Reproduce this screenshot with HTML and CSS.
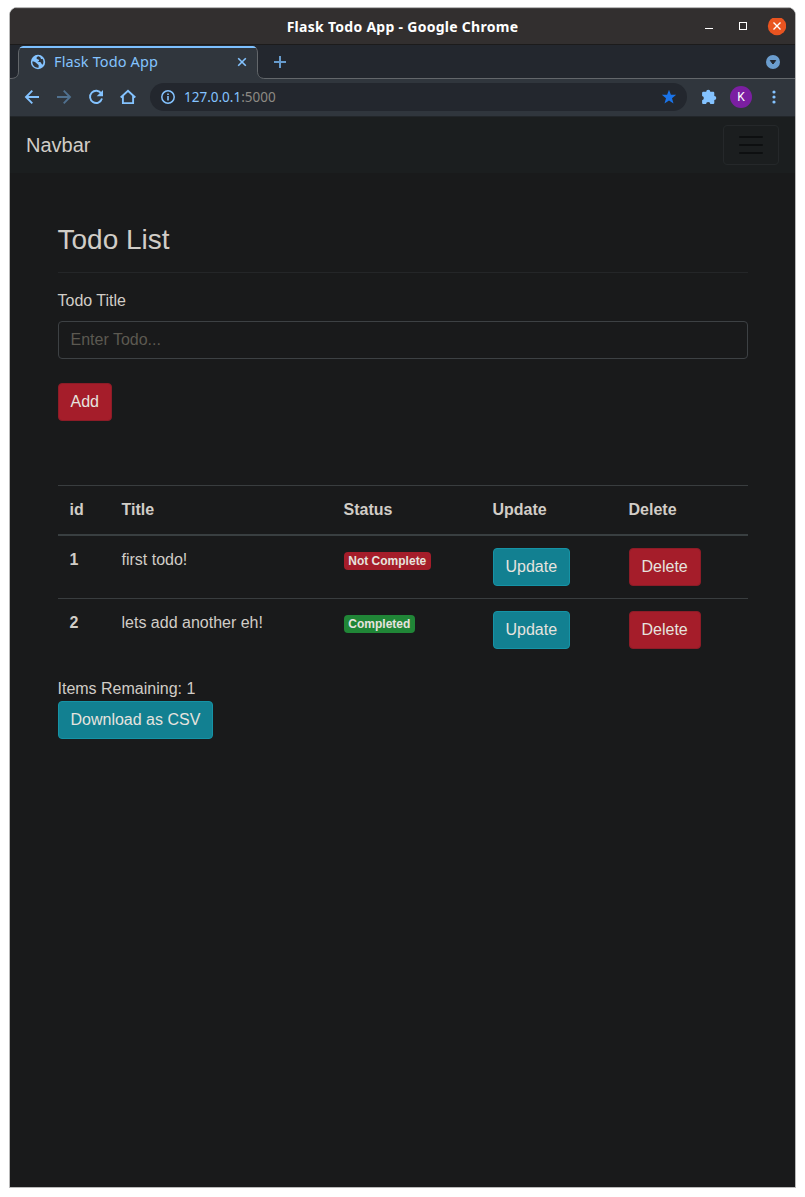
FILE: index.html
```html
<!DOCTYPE html>
<html lang="en">
<head>
<meta charset="utf-8">
<title>Flask Todo App</title>
<link rel="stylesheet" href="styles.css">
</head>
<body>
<div class="window">
  <header class="titlebar">
    <span class="window-title">Flask Todo App - Google Chrome</span>
    <svg class="window-controls" width="88" height="20" viewBox="0 0 88 20">
      <path d="M7 10.500h8" stroke="#fff" stroke-width="1"/>
      <rect x="41.500" y="4.500" width="7" height="7" fill="none" stroke="#fff"/>
      <circle cx="79" cy="8" r="9.200" fill="#e95420"/>
      <path d="M75.500 4.500l7 7m0-7l-7 7" stroke="#fff" stroke-width="1.400"/>
    </svg>
  </header>
  <div class="tabs">
    <svg class="tab-shape" width="785" height="34" viewBox="0 0 785 34">
      <path d="M0 33.500C6 33.500 8.500 31.500 8.500 26V8C8.500 3 11 1 15 1H241C245 1 247.500 3 247.500 8V26C247.500 31 250 33.500 255 33.500H785V34H0Z" fill="#30363d"/>
      <path d="M0 33.500C6 33.500 8.500 31.500 8.500 26V8C8.500 4 10.500 2 13 1.500M243 1.500C246 2 247.500 4 247.500 8V26C247.500 31 250 33.500 255 33.500H785" fill="none" stroke="#63676b"/>
      <path d="M9.500 3C11 1.500 12.500 1 15 1H241C243.500 1 245 1.500 246.500 3Z" fill="#7cc0ff"/>
    </svg>
    <div class="tab">
      <svg width="16" height="16" viewBox="0 0 16 16">
        <circle cx="8" cy="8" r="7.200" fill="#84c3ff"/>
        <path d="M8.800 2.300C7.200 2.500 6.400 3.300 6.600 4.400 6.800 5.400 8.600 4.900 9 6 9.300 7 8.500 7.400 7.500 7.500 8.400 8 11 7.700 11.300 9.200 11.500 10.200 12.100 10.400 12.800 10.500 13.800 8.500 13.600 6.500 12.600 4.700 11.700 5.400 10.400 4.700 10.700 3.700ZM2.300 7.600C3.800 7.500 5.500 8 6.500 9.300 7 10.300 8.400 10.300 8.700 11.400L8.500 13.700C5 14 2.200 11.500 2.300 7.600Z" fill="#30363d"/>
      </svg>
      <span class="tab-title">Flask Todo App</span>
      <svg class="tab-close" width="10" height="10" viewBox="0 0 10 10"><path d="M1.200 1.200l7.600 7.600m0-7.600l-7.600 7.600" stroke="#84c3ff" stroke-width="1.600"/></svg>
    </div>
    <svg class="new-tab" width="12" height="12" viewBox="0 0 12 12"><path d="M0 6h12M6 0v12" stroke="#669bcd" stroke-width="2"/></svg>
    <svg class="tab-search" width="14" height="14" viewBox="0 0 14 14"><circle cx="7" cy="7" r="7" fill="#6b9dce"/><path d="M4.300 5.500h5.400L7 9Z" fill="#23272e" stroke="#23272e" stroke-width="1"/></svg>
  </div>
  <div class="toolbar">
    <svg class="nav-icons" width="112" height="16" viewBox="0 0 112 16" fill="none" stroke="#84c3ff" stroke-width="1.900">
      <path d="M15 8H2.500M8.300 1.700L2 8l6.300 6.300"/>
      <path d="M33 8h12.500M39.700 1.700L46 8l-6.300 6.300" stroke="#50718f"/>
      <path d="M77.300 4.600A6.100 6.100 0 1 0 78 9.600"/>
      <path d="M79 1v6.300h-6.300Z" fill="#84c3ff" stroke="none"/>
      <path d="M96.700 8.500L104 1.900l7.300 6.600M98.900 6.800V14.100h10.200V6.800"/>
    </svg>
    <div class="address">
      <svg width="14" height="14" viewBox="0 0 14 14"><circle cx="7" cy="7" r="6.200" fill="none" stroke="#84c3ff" stroke-width="1.500"/><path d="M7 6v4.500M7 3.400v1.700" stroke="#84c3ff" stroke-width="1.600"/></svg>
      <span class="url">127.0.0.1<span class="port">:5000</span></span>
      <svg class="star" width="16" height="16" viewBox="0 0 16 16"><path d="M8 .800l1.900 5h5.300l-4.200 3.400 1.500 5.300L8 11.500l-4.500 3 1.500-5.300L.800 5.800h5.300Z" fill="#1a73e8"/></svg>
    </div>
    <svg class="extensions" width="16" height="16" viewBox="0 0 16 16"><path d="M2.300 2.800H5.200A2 2 0 0 1 9.300 2.800H12.200Q13.300 2.800 13.300 4V7A2 2 0 0 1 13.300 11V14Q13.300 15.100 12.200 15.100H9.300A2.100 2.100 0 0 0 5.100 15.100H2.200Q1.100 15.100 1.100 14V11.200A2.200 2.200 0 0 0 1.100 6.900V4Q1.100 2.800 2.300 2.800Z" fill="#84c3ff"/></svg>
    <span class="avatar">K</span>
    <svg class="menu" width="4" height="14" viewBox="0 0 4 14" fill="#84c3ff"><circle cx="2" cy="2" r="1.600"/><circle cx="2" cy="7" r="1.600"/><circle cx="2" cy="12" r="1.600"/></svg>
  </div>
  <nav class="navbar">
    <a class="brand">Navbar</a>
    <div class="toggler">
      <svg width="30" height="30" viewBox="0 0 30 30"><path d="M4 7h22M4 15h22M4 23h22" stroke="#0d0f10" stroke-width="2" stroke-linecap="round" stroke-miterlimit="10"/></svg>
    </div>
  </nav>
  <main class="container">
    <h1>Todo List</h1>
    <hr>
    <form>
      <label for="title">Todo Title</label>
      <input id="title" class="field" type="text" placeholder="Enter Todo...">
      <button class="btn danger" type="button">Add</button>
    </form>
    <table class="todos">
      <colgroup><col class="c-id"><col class="c-title"><col class="c-status"><col class="c-update"><col class="c-delete"></colgroup>
      <thead><tr><th>id</th><th>Title</th><th>Status</th><th>Update</th><th>Delete</th></tr></thead>
      <tbody>
        <tr><th>1</th><td>first todo!</td><td><span class="badge danger">Not Complete</span></td><td><a class="btn info">Update</a></td><td><a class="btn danger">Delete</a></td></tr>
        <tr><th>2</th><td>lets add another eh!</td><td><span class="badge success">Completed</span></td><td><a class="btn info">Update</a></td><td><a class="btn danger">Delete</a></td></tr>
      </tbody>
    </table>
    <div class="remaining">Items Remaining: 1</div>
    <a class="btn info">Download as CSV</a>
  </main>
</div>
</body>
</html>
```
FILE: styles.css
```css
* { box-sizing: border-box; }
body {
  margin: 0;
  padding: 7px 9px 9px;
  background: #fff;
  font: 16px/24px "Liberation Sans", Arial, sans-serif;
  color: #d1cdc7;
}
.window {
  height: 1181px;
  border: 1px solid #b9b9b9;
  border-radius: 8px 8px 0 0;
  background: #191a1b;
  overflow: hidden;
}
.titlebar {
  position: relative;
  height: 37px;
  display: flex;
  align-items: center;
  justify-content: center;
  background: #322f2f;
  border-bottom: 1px solid #1c1b1b;
  border-top: 1px solid #444141;
}
.window-title {
  font: bold 14px/20px "Noto Sans", sans-serif;
  letter-spacing: 0.28px;
  color: #fff;
  white-space: nowrap;
}
.window-controls { position: absolute; right: 9px; top: 9px; }
.tabs {
  position: relative;
  height: 34px;
  display: flex;
  align-items: center;
  background: #23272e;
}
.tab-shape { position: absolute; left: 0; top: 0; }
.tab {
  position: relative;
  width: 240px;
  margin-left: 8px;
  padding: 0 12px;
  display: flex;
  align-items: center;
}
.tab-title {
  margin: 0 0 2px 8px;
  font: 14.500px/20px "Noto Sans", sans-serif;
  letter-spacing: 0.13px;
  color: #84c3ff;
}
.tab-close { margin-left: auto; margin-right: -1px; }
.new-tab { position: relative; margin-left: 16px; }
.tab-search { margin-left: auto; margin-right: 15px; }
.toolbar {
  height: 38px;
  display: flex;
  align-items: center;
  padding: 0 0 1px 14px;
  background: #30363d;
  border-bottom: 1px solid #22262a;
}
.address {
  width: 537px;
  height: 28px;
  margin-left: 14px;
  padding: 0 10px 0 11px;
  display: flex;
  align-items: center;
  border-radius: 14px;
  background: #23272e;
}
.url {
  margin-left: 9px;
  font: 13.500px/20px "Noto Sans", sans-serif;
  color: #84c3ff;
}
.port { color: #8d8a84; }
.star { margin-left: auto; }
.extensions { margin-left: 14px; }
.avatar {
  width: 22px;
  height: 22px;
  margin-left: 13px;
  border-radius: 50%;
  background: #7b1fa2;
  color: #fff;
  font: 12px/22px Roboto, sans-serif;
  text-align: center;
}
.menu { margin-left: 19.500px; }
.navbar {
  height: 56px;
  padding: 8px 16px;
  display: flex;
  align-items: center;
  justify-content: space-between;
  background: #1b1e1f;
}
.brand { font-size: 20px; line-height: 30px; }
.toggler {
  width: 56px;
  height: 40px;
  display: flex;
  align-items: center;
  justify-content: center;
  border: 1px solid #25282a;
  border-radius: 4px;
}
.container { width: 690px; margin: 0 auto; padding-top: 50px; }
h1 { margin: 0; font-size: 28px; font-weight: 400; line-height: 33px; }
hr { height: 1px; margin: 16px 0; border: 0; background: #242628; }
label { display: block; margin-bottom: 8px; }
.field {
  display: block;
  width: 100%;
  height: 38px;
  margin-bottom: 24px;
  padding: 6px 12px;
  border: 1px solid #3d4144;
  border-radius: 4px;
  background: transparent;
  color: inherit;
  font: inherit;
}
.field::placeholder { color: #5c5951; opacity: 1; }
.btn {
  display: inline-block;
  height: 38px;
  padding: 6px 12px;
  border: 1px solid;
  border-radius: 4px;
  color: #e6e3df;
  font: inherit;
  vertical-align: top;
}
.danger { background: #a51d2a; border-color: #8c1c27; }
.info { background: #128091; border-color: #1593a6; }
.success { background: #208637; }
.todos {
  width: 690px;
  margin: 64px 0 16px;
  table-layout: fixed;
  border-collapse: separate;
  border-spacing: 0;
}
.c-id { width: 52px; }
.c-title { width: 222px; }
.c-status { width: 149px; }
.c-update { width: 136px; }
.c-delete { width: 131px; }
th, td { padding: 12px; text-align: left; vertical-align: top; border-top: 1px solid #393d3f; }
thead th { border-bottom: 2px solid #393f41; }
tbody tr:first-child > * { border-top: 0; }
.badge {
  display: inline-block;
  padding: 3px 4.800px;
  border-radius: 4px;
  color: #e6e3df;
  font-size: 12px;
  font-weight: 700;
  line-height: 12px;
  vertical-align: baseline;
}
```
